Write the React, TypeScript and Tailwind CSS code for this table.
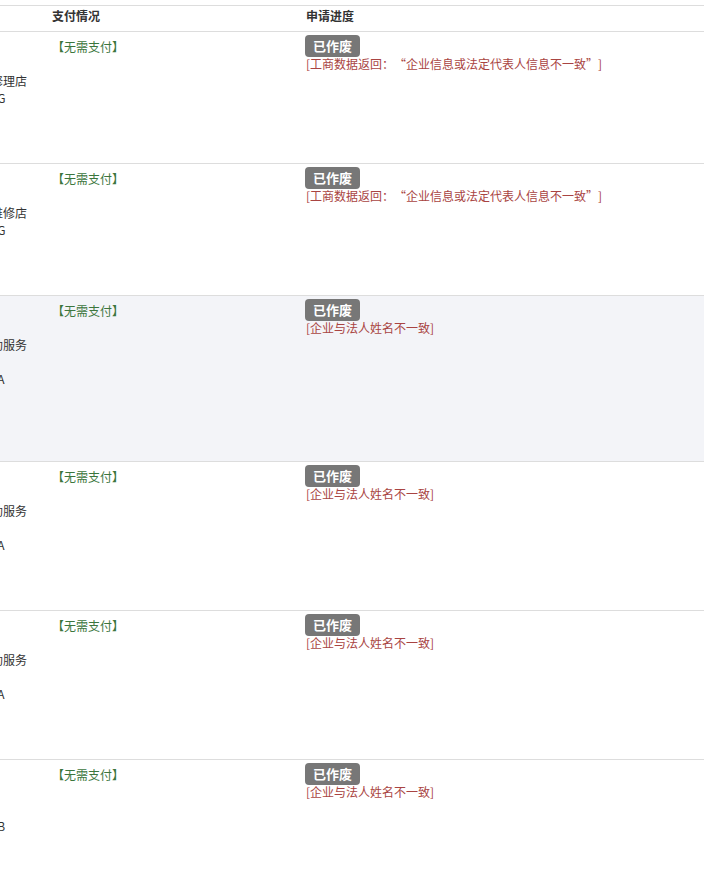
import React from 'react';

interface RowData {
  lines: string[];
  reason: React.ReactNode;
  highlight?: boolean;
}

const Quote = ({ side, children }: { side: 'open' | 'close'; children: React.ReactNode }) => (
  <span className={`inline-block w-[12px] ${side === 'open' ? 'text-right' : 'text-left'}`}>{children}</span>
);

const icReason = (
  <>
    [工商数据返回：<Quote side="open">“</Quote>企业信息或法定代表人信息不一致<Quote side="close">”</Quote>]
  </>
);

const rows: RowData[] = [
  {
    lines: ['张建华', '13826451739', '广州番禺顺达汽车修理店', '代码：914401 MA5G', '营业执照', '2023-05-12', '待审核'],
    reason: icReason,
  },
  {
    lines: ['李志强', '13922087614', '广州白云鑫盛汽车维修店', '代码：914401 MA5G', '营业执照', '2023-05-12', '待审核'],
    reason: icReason,
  },
  {
    lines: ['王美玲', '13631528890', '天河区恒信邻里互助服务', '', '代码：914401 MA9A', '营业执照', '2023-05-11', '待审核', ''],
    reason: '[企业与法人姓名不一致]',
    highlight: true,
  },
  {
    lines: ['王美玲', '13631528890', '天河区恒信邻里互助服务', '', '代码：914401 MA9A', '营业执照', '2023-05-11', '待审核'],
    reason: '[企业与法人姓名不一致]',
  },
  {
    lines: ['王美玲', '13631528890', '天河区恒信邻里互助服务', '', '代码：914401 MA9A', '营业执照', '2023-05-10', '待审核'],
    reason: '[企业与法人姓名不一致]',
  },
  {
    lines: ['陈国栋', '13719264058', '海珠区', '代码：914401 MA2B', '营业执照', '2023-05-10', '待审核', ''],
    reason: '[企业与法人姓名不一致]',
  },
];

const App: React.FC = () => {
  return (
    <div
      className="w-[704px] h-[871px] overflow-hidden bg-white text-[12px] leading-[17px] text-[#333]"
      style={{ fontFamily: '"Noto Sans CJK SC", "Noto Sans", sans-serif' }}
    >
      <div className="-ml-[113px] w-[1000px] pt-[5px]">
        {/* Header */}
        <div className="flex h-[27px] border-t border-b border-[#dddddd] pt-[1px] font-bold">
          <div className="w-[157px] shrink-0 px-2">申请人信息</div>
          <div className="w-[254px] shrink-0 px-2">支付情况</div>
          <div className="w-[420px] shrink-0 px-2">申请进度</div>
        </div>

        {/* Rows */}
        {rows.map((row, i) => (
          <div
            key={i}
            className={`flex border-b border-[#dddddd] pt-[6px] pb-[6px] ${row.highlight ? 'bg-[#f3f4f8]' : 'bg-white'}`}
          >
            <div className="w-[157px] shrink-0 px-2 whitespace-nowrap">
              {row.lines.map((l, j) => (
                <div key={j} className="h-[17px]">
                  {l}
                </div>
              ))}
            </div>
            <div className="w-[254px] shrink-0 px-2 text-[#3c763d]">【无需支付】</div>
            <div className="w-[420px] shrink-0 px-2 whitespace-nowrap">
              <div className="h-[17px]">
                <span className="relative -top-[3px] -ml-[1px] inline-block h-[22px] rounded-[4px] bg-[#777777] px-[8px] text-[13px] font-bold leading-[22px] text-white">
                  已作废
                </span>
              </div>
              <div className="text-[#a94442]">{row.reason}</div>
            </div>
          </div>
        ))}
      </div>
    </div>
  );
};

export default App;
